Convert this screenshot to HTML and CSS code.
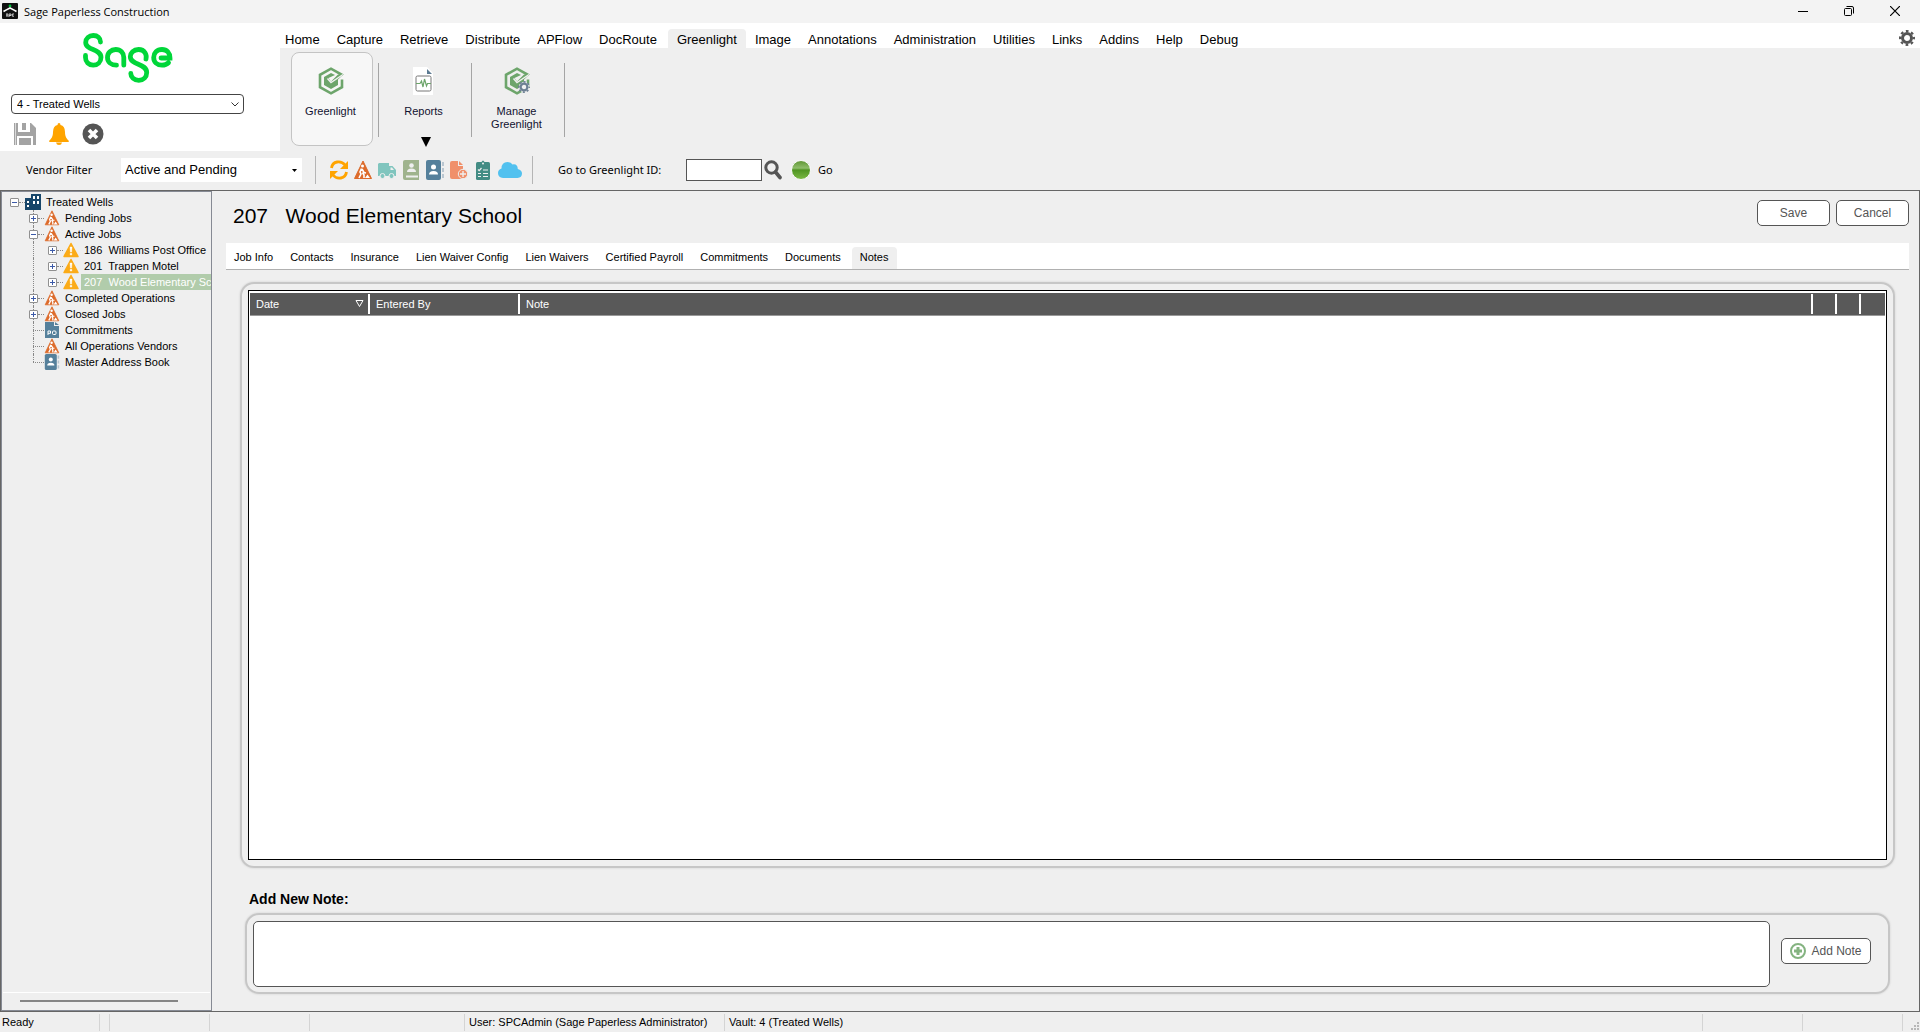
FILE: index.html
```html
<!DOCTYPE html>
<html lang="en">
<head>
<meta charset="utf-8">
<title>Sage Paperless Construction</title>
<link rel="stylesheet" href="styles.css">
</head>
<body>
<svg class="defs" aria-hidden="true">
  <symbol id="works" viewBox="0 0 18 20">
    <path d="M9 1 L17.500 18.500 H.5Z" fill="#dd6b2b" stroke="#dd6b2b" stroke-linejoin="round"/>
    <circle cx="8.500" cy="6" r="1.500" fill="#fff"/>
    <path d="M7.500 8.500 L6 12 L7 14 L5 18 M8 9 L10 12.500 L12 13 M8.500 12.500 L10 15 V18" stroke="#fff" stroke-width="1.600" fill="none"/>
    <path d="M11 18 L13.500 14.500 L16 18Z" fill="#fff"/>
  </symbol>
  <symbol id="warn" viewBox="0 0 16 16">
    <path d="M8 1.500 L15 14.500 H1Z" fill="#fbab18" stroke="#fbab18" stroke-width="1.500" stroke-linejoin="round"/>
    <path d="M7 5 H9 L8.600 10 H7.400Z M7.200 11.300 H8.800 V13 H7.200Z" fill="#fff" stroke="#fff" stroke-width=".4"/>
  </symbol>
  <symbol id="book" viewBox="0 0 18 20">
    <rect x="0" y="0" width="15" height="20" rx="2" fill="#55809b"/>
    <circle cx="7.500" cy="7" r="2.500" fill="#fff"/>
    <path d="M3 14.500 Q3 11 7.500 11 Q12 11 12 14.500Z" fill="#fff"/>
    <path d="M16 2h2v4h-2zM16 8h2v4h-2zM16 14h2v4h-2z" fill="#b9c6d0"/>
  </symbol>
  <symbol id="hex" viewBox="0 0 26 28">
    <path d="M23.500 9 V7.500 L13 1.700 L2 7.800 V20.200 L13 26.300 L24 20.200 V12.500" fill="none" stroke="#6da56b" stroke-width="2.600"/>
    <path d="M20 7.500 L13 14.500 L10.500 11 L17 8 L13 6 L6 10 V18 L13 22 L20 18 V12.500 L26 7" fill="#6da56b"/>
    <path d="M9.500 11.500 L13 15.500 L25 7.500" fill="none" stroke="#efefef" stroke-width="1.500"/>
  </symbol>
  <symbol id="gear" viewBox="0 0 16 16">
    <circle cx="8" cy="8" r="4.500" fill="none" stroke="currentColor" stroke-width="3"/>
    <circle cx="8" cy="8" r="6.900" fill="none" stroke="currentColor" stroke-width="2.200" stroke-dasharray="2.700 2.719" stroke-dashoffset="1.350"/>
  </symbol>
</svg>

<div class="window">
  <header class="titlebar">
    <svg width="16" height="16" viewBox="0 0 16 16"><rect width="16" height="16" rx="1" fill="#111"/><circle cx="8" cy="3" r="1.400" fill="#00c03a"/><path d="M1.500 8.500 Q4 7 8 5 Q12 7 14.500 8.500" fill="none" stroke="#fff" stroke-width="1.700"/><path d="M4 11h2.200M4 12h2M4 13h2.200M7 11v3M7 11h2v1.500h-2M12 11h-1.700v2.200h1.700" stroke="#ddd" stroke-width=".9" fill="none"/></svg>
    <h1 class="titlebar-text">Sage Paperless Construction</h1>
    <div class="window-buttons">
      <button class="plain" aria-label="Minimize"><svg width="10" height="10"><path d="M0 5.500H10" stroke="#000"/></svg></button>
      <button class="plain" aria-label="Restore"><svg width="10" height="10" viewBox="0 0 10 10"><rect x=".5" y="2.500" width="7" height="7" rx="1" fill="none" stroke="#000"/><path d="M2.500 .5H8Q9.500 .5 9.500 2V7.500" fill="none" stroke="#000"/></svg></button>
      <button class="plain" aria-label="Close"><svg width="10" height="10"><path d="M0 0L10 10M10 0L0 10" stroke="#000" stroke-width="1.200"/></svg></button>
    </div>
  </header>

  <div class="top">
    <section class="brand">
      <svg class="logo" width="90" height="50" viewBox="0 0 90 50"><g fill="none" stroke="#00d639" stroke-width="4.800" stroke-linecap="round"><path d="M17.500 9 C17.500 5 14.500 2.500 10.300 2.500 C6 2.500 2.700 5.400 2.700 9.400 C2.700 17.500 18 15.500 18 24.300 C18 29 14.600 32.200 10.200 32.200 C5.800 32.200 2.500 29 2.500 24.500 V22.500"/><path d="M33.500 32.200 C28 32.200 24.500 29 24.500 24.500 C24.500 20 28 16.500 32.700 16.500 C37.500 16.500 40.800 20 40.800 24.500 V32.200"/><path d="M63 26 C64 22 62 16.500 55.500 16.500 C50.500 16.500 47.300 20 47.300 23.500 C47.300 32.500 63.700 30 63.700 39.500 C63.700 44 60.500 47.300 55.800 47.300 C51 47.300 47.800 44 47.800 40.500"/><path d="M78 25 H87 C87 20 84 16.500 79 16.500 C74 16.500 70.700 20 70.700 24.500 C70.700 29 74 32.200 79 32.200 C82 32.200 84 31.300 85.500 29.800"/></g></svg>
      <select class="vault" aria-label="Vault"><option>4 - Treated Wells</option></select>
      <div class="quick">
        <button class="plain" aria-label="Save"><svg width="22" height="22" viewBox="0 0 22 22"><path d="M0 0H17L22 5V22H0Z" fill="#a3a3a3"/><path d="M4 0H16V9H4ZM3 13H19V22H3Z" fill="#fff"/><path d="M8 0H12V7H8ZM5 15H17V22H5Z" fill="#a3a3a3"/><path d="M1.500 0V22" stroke="#fff" stroke-width=".6"/></svg></button>
        <button class="plain" aria-label="Alerts"><svg width="20" height="22" viewBox="0 0 20 22"><path d="M10 0 Q11.500 0 11.500 2 Q16 3 16 9 C16 14 18 16 20 18 Q20 19 19 19 H1 Q0 19 0 18 C2 16 4 14 4 9 Q4 3 8.500 2 Q8.500 0 10 0Z M7 19.500H13Q12.500 22 10 22Q7.500 22 7 19.500Z" fill="#ffa400"/></svg></button>
        <button class="plain" aria-label="Close"><svg width="22" height="22" viewBox="0 0 22 22"><circle cx="11" cy="11" r="10.500" fill="#555"/><path d="M7 7L15 15M15 7L7 15" stroke="#fff" stroke-width="3.600"/></svg></button>
      </div>
    </section>
    <div class="ribbon-area">
      <nav class="menu">
        <a href="#">Home</a><a href="#">Capture</a><a href="#">Retrieve</a><a href="#">Distribute</a><a href="#">APFlow</a><a href="#">DocRoute</a><a href="#" class="current">Greenlight</a><a href="#">Image</a><a href="#">Annotations</a><a href="#">Administration</a><a href="#">Utilities</a><a href="#">Links</a><a href="#">Addins</a><a href="#">Help</a><a href="#">Debug</a>
        <button class="plain settings" aria-label="Settings"><svg width="16" height="16"><use href="#gear"/></svg></button>
      </nav>
      <div class="ribbon">
        <button class="tool active"><svg width="26" height="28"><use href="#hex"/></svg><span>Greenlight</span></button>
        <i class="rule"></i>
        <button class="tool"><svg width="22" height="28" viewBox="0 0 22 28"><path d="M0 0H14L20 6V28H0Z" fill="#fff"/><path d="M14 2L19 7H14Z" fill="#5c7b92"/><rect x="3" y="9" width="15" height="15" rx="1.500" fill="#fff" stroke="#777"/><path d="M3 16.500H7L8.500 14L10 20L11.500 12L13.500 19L14.500 16.500H18" fill="none" stroke="#6da56b" stroke-width="1.200"/></svg><span>Reports</span><svg class="drop" width="10" height="10"><path d="M0 0H10L5 10Z"/></svg></button>
        <i class="rule"></i>
        <button class="tool"><svg width="26" height="28" viewBox="0 0 26 28"><use href="#hex" width="26" height="28"/><svg x="14" y="14" width="12" height="12" viewBox="0 0 16 16" color="#6c7f93"><circle cx="8" cy="8" r="7" fill="#efefef"/><use href="#gear"/></svg></svg><span>Manage<br>Greenlight</span></button>
        <i class="rule"></i>
      </div>
    </div>
  </div>

  <div class="toolbar">
    <label class="filter-label" for="vendor">Vendor Filter</label>
    <select id="vendor" class="filter"><option>Active and Pending</option></select>
    <i class="bar"></i>
    <div class="tools">
      <button class="plain" aria-label="Refresh"><svg width="18" height="20" viewBox="0 0 18 20"><path d="M1.500 8 C2.500 1 11 0 15 5 M16.500 12 C15.500 19 7 20 3 15" fill="none" stroke="#ffa400" stroke-width="2.800"/><path d="M18 1V9H10ZM0 19V11H8Z" fill="#ffa400"/></svg></button>
      <button class="plain" aria-label="Jobs"><svg width="18" height="20"><use href="#works"/></svg></button>
      <button class="plain" aria-label="Vendors"><svg width="18" height="20" viewBox="0 0 18 20"><path d="M1 3H11V6H14.500L18 10V16H0V4Z" fill="#80c5be"/><path d="M12.500 7.500H14L16 10H12.500Z" fill="#efefef"/><g fill="#80c5be" stroke="#efefef"><circle cx="4.500" cy="16" r="2.500"/><circle cx="13.500" cy="16" r="2.500"/></g></svg></button>
      <button class="plain" aria-label="Contacts"><svg width="18" height="20" viewBox="0 0 18 20"><path d="M3 0H17V20H3Q1 20 1 18V2Q1 0 3 0Z" fill="#9fb38d"/><circle cx="9.500" cy="5.500" r="2.300" fill="#efefef"/><path d="M5 12Q5 8.500 9.500 8.500Q14 8.500 14 12ZM4 15.500H16V17.500H4Z" fill="#efefef"/></svg></button>
      <button class="plain" aria-label="Address book"><svg width="18" height="20"><use href="#book"/></svg></button>
      <button class="plain" aria-label="Add document"><svg width="18" height="20" viewBox="0 0 18 20"><path d="M2 1H8V6H13V19H2Q0 19 0 17V3Q0 1 2 1ZM9 1L13 5H9Z" fill="#f0906b"/><circle cx="13" cy="14" r="4.700" fill="#f0906b" stroke="#efefef"/><path d="M13 11V17M10 14H16" stroke="#efefef" stroke-width="1.400"/></svg></button>
      <button class="plain" aria-label="Checklist"><svg width="18" height="20" viewBox="0 0 18 20"><rect x="2" y="2" width="14" height="18" rx="1.500" fill="#438c84"/><path d="M6 5V2H7.500Q9 -1 10.500 2H12V5Z" fill="#438c84"/><circle cx="9" cy="3.500" r="1" fill="#efefef"/><path d="M4 9.500L5.200 10.700L7.500 8M9 10H14M4 13.500H7M9 13.500H14M4 16.500H7M9 16.500H14" fill="none" stroke="#efefef" stroke-width="1.200"/></svg></button>
      <button class="plain" aria-label="Cloud"><svg width="24" height="20" viewBox="0 0 24 20"><path d="M5 18Q0 17.500 0 13Q0 9.500 3.500 8.500Q3.500 2 9.500 2Q13 2 14.500 4.500Q19.500 3.500 19.800 9Q24 10 24 13.500Q24 17.500 19.500 18Z" fill="#52c1ef"/></svg></button>
    </div>
    <i class="bar"></i>
    <label class="goto-label" for="gid">Go to Greenlight ID:</label>
    <input id="gid" class="goto" type="text">
    <button class="plain find" aria-label="Search"><svg width="18" height="20" viewBox="0 0 18 20"><circle cx="7.500" cy="7.500" r="5.700" fill="none" stroke="#555" stroke-width="3"/><path d="M11.500 12L16 17.500" stroke="#555" stroke-width="3.600" stroke-linecap="round"/></svg></button>
    <button class="plain go"><svg width="20" height="20" viewBox="0 0 20 20"><defs><linearGradient id="shine" x2="0" y2="1"><stop offset="0" stop-color="#5c9431"/><stop offset=".4" stop-color="#8fbd6b"/><stop offset=".5" stop-color="#4f9422"/><stop offset="1" stop-color="#7cba45"/></linearGradient></defs><circle cx="10" cy="10" r="9.500" fill="url(#shine)" stroke="#fafafa"/></svg>Go</button>
  </div>

  <main class="workspace">
    <aside class="side">
      <ul class="tree">
        <li class="root"><i class="box"></i><svg width="16" height="16" viewBox="0 0 16 16"><path d="M0 4H6V0H16V16H0Z" fill="#17466a"/><path d="M2 7h2v2H2zM2 11h2v2H2zM8 2h2v3H8zM12 2h2v3h-2zM8 7h2v3H8zM12 7h2v3h-2z" fill="#fff"/></svg><span>Treated Wells</span></li>
        <li><i class="box plus"></i><svg width="16" height="16"><use href="#works"/></svg><span>Pending Jobs</span></li>
        <li><i class="box"></i><svg width="16" height="16"><use href="#works"/></svg><span>Active Jobs</span></li>
        <li class="leaf"><i class="box plus"></i><svg width="16" height="16"><use href="#warn"/></svg><span>186&nbsp; Williams Post Office</span></li>
        <li class="leaf"><i class="box plus"></i><svg width="16" height="16"><use href="#warn"/></svg><span>201&nbsp; Trappen Motel</span></li>
        <li class="leaf"><i class="box plus"></i><svg width="16" height="16"><use href="#warn"/></svg><span class="picked">207&nbsp; Wood Elementary School</span></li>
        <li><i class="box plus"></i><svg width="16" height="16"><use href="#works"/></svg><span>Completed Operations</span></li>
        <li><i class="box plus"></i><svg width="16" height="16"><use href="#works"/></svg><span>Closed Jobs</span></li>
        <li><i class="box none"></i><svg width="16" height="16" viewBox="0 0 16 16"><path d="M1 0H10V4H15V16H1ZM11 0L15 3H11Z" fill="#55809b"/><path d="M4 13V9H6.500V11.300H4" fill="none" stroke="#fff"/><rect x="8.500" y="9" width="3.500" height="3.500" rx="1" fill="none" stroke="#fff"/></svg><span>Commitments</span></li>
        <li><i class="box none"></i><svg width="16" height="16"><use href="#works"/></svg><span>All Operations Vendors</span></li>
        <li class="last"><i class="box none"></i><svg width="16" height="16"><use href="#book"/></svg><span>Master Address Book</span></li>
      </ul>
      <div class="scroll"><i></i></div>
    </aside>

    <section class="page">
      <div class="page-head">
        <h2>207 &nbsp; Wood Elementary School</h2>
        <button class="btn">Save</button>
        <button class="btn">Cancel</button>
      </div>
      <nav class="tabs">
        <a href="#">Job Info</a><a href="#">Contacts</a><a href="#">Insurance</a><a href="#">Lien Waiver Config</a><a href="#">Lien Waivers</a><a href="#">Certified Payroll</a><a href="#">Commitments</a><a href="#">Documents</a><a href="#" class="current">Notes</a>
      </nav>
      <div class="group notes">
        <div class="grid">
          <table>
            <colgroup><col class="c-date"><col class="c-by"><col><col class="c-act"><col class="c-act"><col class="c-act"></colgroup>
            <thead><tr><th>Date<svg class="sort" width="9" height="8"><path d="M1 .5H8L4.500 6.500Z" fill="none" stroke="#fff"/></svg></th><th>Entered By</th><th>Note</th><th></th><th></th><th></th></tr></thead>
          </table>
        </div>
      </div>
      <label class="note-label" for="note">Add New Note:</label>
      <div class="group entry">
        <textarea id="note" class="note"></textarea>
        <button class="btn add"><svg width="16" height="16" viewBox="0 0 16 16"><circle cx="8" cy="8" r="7" fill="none" stroke="#84b380" stroke-width="2"/><path d="M8 4V12M4 8H12" stroke="#84b380" stroke-width="3"/></svg>Add Note</button>
      </div>
    </section>
  </main>

  <footer class="status">
    <span class="s-ready">Ready</span><span class="s-gap"></span><span class="s-cell"></span><span class="s-cell"></span><span class="s-blank"></span><span class="s-user">User: SPCAdmin (Sage Paperless Administrator)</span><span class="s-vault">Vault: 4 (Treated Wells)</span><span class="s-cell"></span><span class="s-cell"></span>
    <svg class="grip" width="9" height="9"><path d="M6 0h2v2H6zM3 3h2v2H3zM6 3h2v2H6zM0 6h2v2H0zM3 6h2v2H3zM6 6h2v2H6z" fill="#b8b8b8"/></svg>
  </footer>
</div>
</body>
</html>
```
FILE: styles.css
```css
* { box-sizing: border-box; }
body {
  margin: 0;
  background: #efefef;
  color: #000;
  font: 11px/16px "Liberation Sans", Arial, sans-serif;
}
button, input, select, textarea { font: inherit; color: inherit; margin: 0; }
a { color: inherit; text-decoration: none; }
svg { display: block; flex: none; }
.defs { position: absolute; width: 0; height: 0; }
.plain { border: 0; background: none; padding: 0; display: block; }

.window { min-height: 100vh; display: flex; flex-direction: column; }

.titlebar { display: flex; align-items: center; height: 23px; padding: 0 20px 2px 2px; background: #f3f3f3; }
.titlebar-text { margin: 0 0 0 6px; padding-top: 2px; font: 11px/18px "Open Sans", "Segoe UI", sans-serif; }
.window-buttons { display: flex; gap: 36px; margin-left: auto; }

.top { display: flex; background: #fff; }
.brand { width: 280px; height: 128px; padding: 10px 11px 0; }
.logo { margin-left: 72px; }
.vault {
  display: block; width: 233px; height: 20px; margin-top: 11px; padding: 0 5px;
  appearance: none; border: 1px solid #444; border-radius: 4px;
  background: url("data:image/svg+xml,%3Csvg xmlns='http://www.w3.org/2000/svg' width='8' height='5'%3E%3Cpath d='M.5 .5L4 4L7.500 .5' fill='none' stroke='%23333'/%3E%3C/svg%3E") no-repeat right 4px center #fff;
}
.quick { display: flex; gap: 13px; margin: 9px 0 0 3px; }

.ribbon-area { flex: 1; display: flex; flex-direction: column; }
.menu { display: flex; height: 25px; padding: 6px 5px 0 0; font-size: 13px; line-height: 21px; }
.menu a { padding: 0 9px 0 8px; height: 19px; }
.menu a:first-child { padding-left: 5px; }
.menu .current { margin: 0 1px 0 2px; padding: 0 9px; background: #efefef; border-radius: 4px 4px 0 0; }
.settings { margin: -2px 0 0 auto; color: #555; }
.ribbon { flex: 1; display: flex; padding: 4px 11px; background: #efefef; }
.tool {
  position: relative; width: 82px; height: 94px; padding: 14px 3px 0 0;
  display: flex; flex-direction: column; align-items: center; gap: 10px;
  border: 1px solid transparent; border-radius: 8px; background: none;
  line-height: 13px; color: #111130;
}
.tool.active { border-color: #c4c4c4; background: #f7f7f7; }
.drop { position: absolute; bottom: -2px; left: 36px; fill: #000; }
.rule { width: 1px; height: 74px; margin: 11px 5px 0; background: #a5a5a5; }

.toolbar {
  display: flex; align-items: center; height: 39px; padding: 0 26px 1px;
  font-family: "Noto Sans", Tahoma, sans-serif;
}
.filter-label { width: 95px; }
.filter {
  width: 181px; height: 24px; padding: 0 4px; border: 0; appearance: none;
  font: 13px/24px "Liberation Sans", Arial, sans-serif;
  background: url("data:image/svg+xml,%3Csvg xmlns='http://www.w3.org/2000/svg' width='5' height='3'%3E%3Cpath d='M0 0H5L2.500 3Z'/%3E%3C/svg%3E") no-repeat right 5px center #fff;
}
.bar { width: 1px; height: 28px; background: #b5b5b5; margin: 0 14px 0 13px; }
.tools { display: flex; gap: 6px; }
.tools + .bar { margin: 0 25px 0 10px; }
.goto-label { width: 128px; }
.goto { width: 76px; height: 22px; border: 1px solid #555; background: #fff; }
.find { margin-left: 2px; }
.go { display: flex; align-items: center; gap: 7px; margin-left: 9px; }

.workspace { flex: 1; display: flex; border: 1px solid #666; }
.side { width: 211px; display: flex; flex-direction: column; overflow: hidden; border: 1px solid #868a94; }
.tree { flex: 1; list-style: none; margin: 0; padding: 2px 0 0 8px; }
.tree li { position: relative; display: flex; align-items: center; height: 16px; padding-left: 19px; white-space: nowrap; }
.tree li.root { padding-left: 0; }
.tree li.leaf { padding-left: 38px; }
.tree li::before { content: ""; position: absolute; left: 23px; top: 0; bottom: 0; border-left: 1px dotted #888; }
.tree li.root::before { display: none; }
.tree li.last::before { bottom: 8px; }
.box {
  position: relative; flex: none; width: 9px; height: 9px; margin-right: 6px; border: 1px solid #909090; border-radius: 1px;
  background: linear-gradient(#3c5aa8, #3c5aa8) center / 5px 1px no-repeat #fff;
}
.box.plus { background: linear-gradient(#3c5aa8, #3c5aa8) center / 5px 1px no-repeat, linear-gradient(#3c5aa8, #3c5aa8) center / 1px 5px no-repeat #fff; }
.box::after { content: ""; position: absolute; left: 8px; top: 3px; width: 6px; border-top: 1px dotted #888; }
.box.none { border-color: transparent; background: none; }
.box.none::after { left: 3px; width: 11px; }
.tree span { padding-left: 5px; }
.tree .picked { margin-left: 2px; padding-left: 3px; flex: 1; background: #b1ccab; color: #fff; }
.scroll { height: 18px; margin: 0 1px; padding: 7px 32px 0 17px; border-top: 1px solid #fff; }
.scroll i { display: block; height: 2px; background: #858585; }

.page { flex: 1; min-width: 0; display: flex; flex-direction: column; padding: 9px 10px 17px 14px; }
.page-head { display: flex; gap: 6px; height: 43px; }
h2 { flex: 1; margin: 0 0 0 7px; font-weight: 400; font-size: 21px; line-height: 32px; }
.btn {
  width: 73px; height: 26px; padding: 0; border: 1px solid #555; border-radius: 5px;
  background: #fff; color: #555; font-size: 12px;
}
.tabs { display: flex; align-items: flex-end; height: 27px; background: #fff; border-bottom: 1px solid #b0b0b0; }
.tabs a { height: 22px; padding: 0 9px 0 8px; line-height: 21px; }
.tabs .current { margin-left: 2px; background: #efefef; border-radius: 4px 4px 0 0; }
.group { border: 2px solid #c6c6c6; border-radius: 14px; box-shadow: 0 0 2px #c8c8c8; }
.notes { flex: 1; display: flex; margin: 12px 14px 0; padding: 6px; }
.grid { flex: 1; border: 1px solid #000; background: #fff; padding: 2px 1px; }
table { width: 100%; table-layout: fixed; border-collapse: separate; border-spacing: 0; background: #595959; border-bottom: 1px solid #999; color: #fff; }
th { height: 22px; padding: 0 6px; text-align: left; font-weight: 400; background: linear-gradient(#fff, #fff) right center / 2px 20px no-repeat; }
th:last-child { background: none; }
.c-date { width: 120px; }
.c-by { width: 150px; }
.c-act { width: 24px; }
.sort { float: right; margin-top: 4px; }
.note-label { margin: 22px 0 0 23px; font-size: 14px; line-height: 18px; font-weight: 700; }
.entry { display: flex; align-items: center; gap: 11px; height: 81px; margin: 5px 19px 0 19px; padding: 0 17px 0 6px; }
.note { flex: 1; height: 66px; border: 1px solid #555; border-radius: 5px; background: #fff; resize: none; }
.add { display: flex; align-items: center; justify-content: center; gap: 5px; width: 90px; margin-bottom: 6px; }

.status { display: flex; align-items: flex-end; height: 20px; padding: 0 0 1px 2px; line-height: 17px; }
.status span { height: 17px; border-right: 1px solid #d4d4d4; white-space: nowrap; }
.s-ready { width: 98px; }
.s-gap { width: 10px; }
.s-cell { width: 100px; }
.status .s-blank { width: 155px; }
.s-user { width: 260px; padding-left: 4px; }
.s-vault { flex: 1; padding-left: 4px; }
.grip { margin-left: 8px; }
```
